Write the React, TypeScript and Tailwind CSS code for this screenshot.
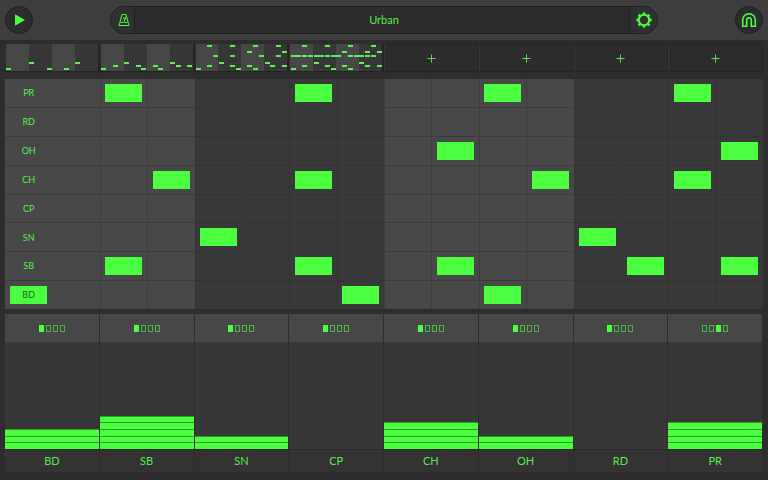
const tracks = ["PR", "RD", "OH", "CH", "CP", "SN", "SB", "BD"];

type Pattern = Record<string, number[]>;

const patterns: Pattern[] = [
  { SN: [4, 12], BD: [0, 7, 10] },
  { SN: [4, 12], SB: [2, 6, 9, 13, 15], BD: [0, 7, 10] },
  {
    PR: [2, 6, 10, 14],
    OH: [9, 15],
    CH: [3, 6, 11, 14],
    SN: [4, 12],
    SB: [2, 6, 9, 13, 15],
    BD: [0, 7, 10],
  },
  {
    PR: [2, 6, 10, 14],
    OH: [9, 13, 15],
    CH: [0, 1, 2, 3, 4, 5, 6, 7, 8, 10, 11, 12, 13, 14],
    SN: [4, 12],
    SB: [2, 6, 9, 13, 15],
    BD: [0, 7, 10],
  },
];

const steps = Array.from({ length: 16 }, (_, i) => i);

const channels = [
  { name: "BD", level: 3, bank: 0 },
  { name: "SB", level: 5, bank: 0 },
  { name: "SN", level: 2, bank: 0 },
  { name: "CP", level: 0, bank: 0 },
  { name: "CH", level: 4, bank: 0 },
  { name: "OH", level: 2, bank: 0 },
  { name: "RD", level: 0, bank: 0 },
  { name: "PR", level: 4, bank: 2 },
];

const isLight = (step: number) => step % 8 < 4;

function Thumbnail({ pattern, index }: { pattern: Pattern; index: number }) {
  return (
    <button
      aria-label={`Pattern ${index + 1}`}
      className="flex h-7 flex-col border-r-2 border-b border-[#242424] pl-px"
    >
      {tracks.map((t) => (
        <span key={t} className="grid w-full flex-1 grid-cols-16">
          {steps.map((s) => (
            <span
              key={s}
              className={`flex items-center justify-center ${isLight(s) ? "bg-[#474747]" : "bg-[#373737]"}`}
            >
              {pattern[t]?.includes(s) && <span className="h-0.5 w-[5px] bg-[#5cf054]" />}
            </span>
          ))}
        </span>
      ))}
    </button>
  );
}

function Header() {
  return (
    <header className="flex h-10 items-center justify-between bg-[#3e3e3e] px-[5px]">
      <button
        aria-label="Play"
        className="flex size-7 items-center justify-center rounded-full border border-[#1f1f1f] bg-[#2c2c2c]"
      >
        <svg viewBox="0 0 12 14" className="ml-0.5 h-3 w-2.5 fill-[#4bff40]">
          <path d="M0 0 12 7 0 14Z" />
        </svg>
      </button>
      <div className="flex h-7 w-[548px] overflow-hidden rounded-full border border-[#1f1f1f] bg-[#2c2c2c]">
        <button
          aria-label="Metronome"
          className="flex w-6 items-center justify-end border-r border-[#222] bg-[#303030] pr-1"
        >
          <svg viewBox="0 0 12 14" className="h-3.5 w-3 shrink-0 fill-none stroke-[#4bff40]">
            <path d="M4 1.5h4L11 12.5H1ZM2.5 9.5h2.7M7 9.5h2.5M5.6 10 8.6 2.5M6 4v2.5" />
          </svg>
        </button>
        <h1 className="flex flex-1 items-center justify-center pl-1 text-[11px]">Urban</h1>
        <button
          aria-label="Settings"
          className="flex w-7 items-center justify-start border-l border-[#1f1f1f] bg-[#303030] pl-1.5"
        >
          <svg viewBox="0 0 16 16" className="size-4 shrink-0 fill-none stroke-[#4bff40]">
            <circle cx="8" cy="8" r="5.2" strokeWidth="2" />
            <circle cx="8" cy="8" r="6.6" strokeWidth="2" pathLength="80" strokeDasharray="5 5" strokeDashoffset="2.5" />
          </svg>
        </button>
      </div>
      <button
        aria-label="Snap"
        className="flex size-7 items-center justify-center rounded-full border border-[#1f1f1f] bg-[#2c2c2c]"
      >
        <svg viewBox="0 0 16 16" className="size-4 fill-none stroke-[#4bff40]" strokeWidth="1.6">
          <path d="M1.7 14.3V8a6.3 6.3 0 0 1 12.6 0v6.3h-4V8a2.3 2.3 0 0 0-4.6 0v6.3Z" />
        </svg>
      </button>
    </header>
  );
}

export default function App() {
  const current = patterns[2];
  return (
    <main className="flex min-h-screen flex-col bg-[#2d2d2d] font-[Lato,sans-serif] text-[#56ee4c]">
      <Header />

      <nav aria-label="Patterns" className="mx-[5px] mt-1 grid grid-cols-8">
        {patterns.map((p, i) => (
          <Thumbnail key={i} pattern={p} index={i} />
        ))}
        {[4, 5, 6, 7].map((i) => (
          <button
            key={i}
            aria-label={`Add pattern ${i + 1}`}
            className="flex h-7 items-center justify-center border border-l-[#383838] border-y-[#252525] border-r-[#252525] bg-[#2c2c2c]"
          >
            <svg viewBox="0 0 9 9" className="size-[9px] stroke-[#56e24c]">
              <path d="M4.5 .5v8M.5 4.5h8" />
            </svg>
          </button>
        ))}
      </nav>

      <section aria-label="Steps" className="mx-[5px] mt-[7px] flex flex-1 flex-col">
        {tracks.map((t, row) => (
          <div key={t} className="grid flex-1 grid-cols-16">
            {steps.map((s) => {
              const on = current[t]?.includes(s);
              const shade = isLight(s)
                ? "border-[#3c3c3c] bg-[#484848]"
                : "border-[#333333] bg-[#393939]";
              return (
                <button
                  key={s}
                  aria-label={`${t} step ${s + 1}`}
                  className={`flex items-center justify-center text-[9px] ${shade} ${row === 0 ? "" : "border-t"} ${s < 2 ? "" : "border-l"}`}
                >
                  <span
                    className={`flex h-[18px] w-[37px] items-center justify-center ${on ? "bg-[#4bff40]" : ""} ${on && s === 0 ? "text-[#2c5c28]" : ""}`}
                  >
                    {s === 0 ? t : null}
                  </span>
                </button>
              );
            })}
          </div>
        ))}
      </section>

      <section aria-label="Mixer" className="mx-[5px] mt-[5px] mb-2 grid grid-cols-8">
        {channels.map((c) => (
          <div key={c.name} className="flex flex-col border-r border-[#2d2d2d]">
            <div className="flex h-7 items-center justify-center gap-0.5 bg-[#474747]">
              {[0, 1, 2, 3].map((b) => (
                <button
                  key={b}
                  aria-label={`${c.name} bank ${b + 1}`}
                  className={`h-[7px] w-[5px] border ${b === c.bank ? "border-[#4bff40] bg-[#4bff40]" : "border-[#4cb844]"}`}
                />
              ))}
            </div>
            <div
              role="meter"
              aria-label={`${c.name} level`}
              aria-valuenow={c.level}
              aria-valuemin={0}
              aria-valuemax={16}
              className="flex h-[108px] flex-col border-b border-[#2a2a2a] bg-[#373737]"
            >
              {steps.map((i) => {
                const lit = 15 - i < c.level;
                return (
                  <div
                    key={i}
                    className={`flex-1 border-t ${lit ? "border-[#2f9a28] bg-[#4bff40]" : "border-[#353535]"}`}
                  />
                );
              })}
            </div>
            <div className="flex h-[22px] items-center justify-center bg-[#343233] text-[11px]">{c.name}</div>
          </div>
        ))}
      </section>
    </main>
  );
}
